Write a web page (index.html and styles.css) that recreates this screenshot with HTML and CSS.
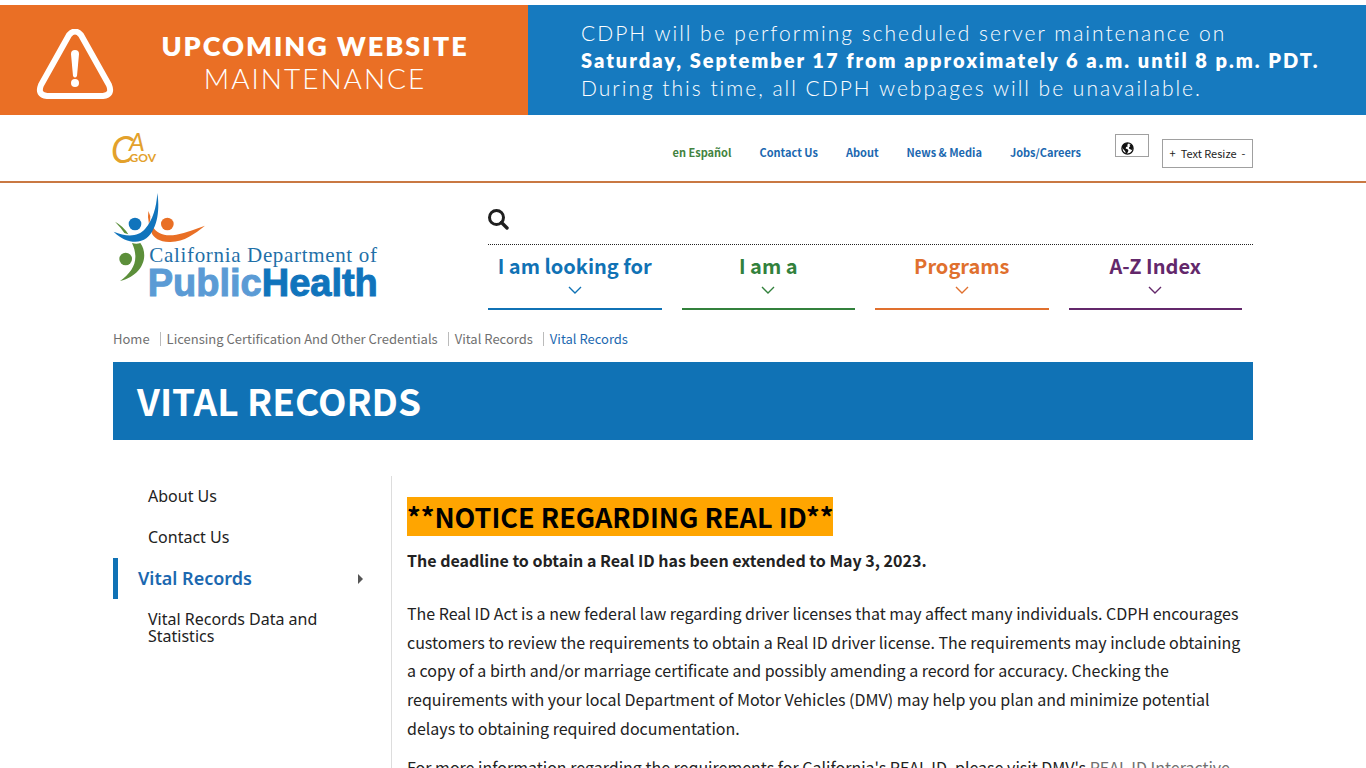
FILE: index.html
```html
<!DOCTYPE html>
<html lang="en">
<head>
    <meta charset="UTF-8">
    <meta name="viewport" content="width=device-width, initial-scale=1.0">
    <title>Vital Records</title>
    <link rel="stylesheet" href="styles.css">
</head>
<body>

    <section class="alert-banner">
        <div class="alert-title">
            <svg class="alert-icon" viewBox="0 0 78 70" aria-hidden="true">
                <path d="M33 6 Q39 -1 45 6 L73 56 Q77 66 67 67 H11 Q1 66 5 56 Z" fill="none" stroke="#fff" stroke-width="6" stroke-linejoin="round"/>
                <path d="M35 25 Q35 21 39 21 Q43 21 43 25 L41 47 Q39 50 37 47 Z" fill="#fff"/>
                <circle cx="39" cy="54" r="4" fill="#fff"/>
            </svg>
            <p class="alert-heading"><strong>UPCOMING WEBSITE</strong><br>MAINTENANCE</p>
        </div>
        <p class="alert-text">
            CDPH will be performing scheduled server maintenance on<br>
            <strong>Saturday, September 17 from approximately 6 a.m. until 8 p.m. PDT.</strong><br>
            During this time, all CDPH webpages will be unavailable.
        </p>
    </section>

    <div class="utility-bar">
        <div class="container utility-inner">
            <a href="#" class="ca-gov" aria-label="CA.gov">
                <svg viewBox="0 0 44 34" width="44" height="34">
                    <g fill="#e3a12b">
                        <text x="-2" y="31" class="ca-c">C</text>
                        <text x="16" y="19" class="ca-a">A</text>
                        <text x="14" y="30" class="ca-dot">.GOV</text>
                    </g>
                </svg>
            </a>
            <nav class="utility-links">
                <a href="#" class="espanol">en Español</a>
                <a href="#">Contact Us</a>
                <a href="#">About</a>
                <a href="#">News &amp; Media</a>
                <a href="#">Jobs/Careers</a>
            </nav>
            <button class="translate" aria-label="Translate">
                <svg viewBox="0 0 14 14" width="13" height="13">
                    <circle cx="7" cy="7" r="6" fill="#fff" stroke="#111" stroke-width="1.4"/>
                    <path d="M1.2 5 Q3 1 7 1 L8 2 L6.500 3.300 L7.500 4.500 L5.500 5.500 L5 7 L7.500 8 L8 9.500 L6.300 12.800 Q4.600 12.500 4.500 10 L2.800 8 L1.500 6.500 Z" fill="#111"/>
                    <path d="M9 3 L11.500 3 L13 6 L12 9 L10.700 8 L8.800 7.400 L8.700 5.600 L10 4.600 Z" fill="#111"/>
                </svg>
            </button>
            <div class="text-resize">
                <button aria-label="Increase text size">+</button>
                <span>Text Resize</span>
                <button aria-label="Decrease text size">-</button>
            </div>
        </div>
    </div>

    <header class="container site-header">
        <a href="#" class="logo" aria-label="California Department of Public Health">
            <svg viewBox="0 0 801 321">
                <path d="M6 86 Q32 100 46 124 L34 120 Q24 104 6 86 Z" fill="#5c8f3a"/>
                <path d="M57 150 Q70 154 82 150 C108 186 92 246 21 264 C62 234 80 200 57 150 Z" fill="#5c8f3a"/>
                <circle cx="38" cy="198" r="19" fill="#5c8f3a"/>
                <path d="M106 54 L112 70 Q113 82 108 94 Q103 72 106 54 Z" fill="#e96f25"/>
                <path d="M118 98 C132 124 156 130 190 125 C220 119 248 108 276 98 C245 122 215 146 172 147 C140 148 122 134 116 120 Z" fill="#e96f25"/>
                <circle cx="163" cy="93" r="19" fill="#e96f25"/>
                <path d="M133 0 C142 60 130 112 100 136 C76 154 36 150 2 116 C40 132 76 132 96 108 C120 80 130 45 133 0 Z" fill="#1074bc"/>
                <circle cx="66" cy="93" r="19" fill="#1074bc"/>
                <text x="109" y="208" class="logo-dept">California Department of</text>
                <text x="104" y="309" class="logo-name"><tspan class="logo-public">Public</tspan><tspan>Health</tspan></text>
            </svg>
        </a>
        <div class="header-right">
            <div class="search-row">
                <button class="search-btn" aria-label="Search">
                    <svg viewBox="0 0 21 21" width="21" height="21">
                        <circle cx="8.500" cy="8.500" r="7" fill="none" stroke="#1f1f1f" stroke-width="3"/>
                        <path d="M13.500 13.500 L19 19" stroke="#1f1f1f" stroke-width="3.400" stroke-linecap="round"/>
                    </svg>
                </button>
            </div>
            <nav class="main-nav">
                <a href="#" class="nav-blue">I am looking for
                    <svg viewBox="0 0 14 8"><path d="M1 1 L7 7 L13 1"/></svg></a>
                <a href="#" class="nav-green">I am a
                    <svg viewBox="0 0 14 8"><path d="M1 1 L7 7 L13 1"/></svg></a>
                <a href="#" class="nav-orange">Programs
                    <svg viewBox="0 0 14 8"><path d="M1 1 L7 7 L13 1"/></svg></a>
                <a href="#" class="nav-purple">A-Z Index
                    <svg viewBox="0 0 14 8"><path d="M1 1 L7 7 L13 1"/></svg></a>
            </nav>
        </div>
    </header>

    <div class="container">
        <nav class="breadcrumb" aria-label="Breadcrumb">
            <a href="#">Home</a>
            <a href="#">Licensing Certification And Other Credentials</a>
            <a href="#">Vital Records</a>
            <a href="#" class="current">Vital Records</a>
        </nav>

        <h1 class="page-title">VITAL RECORDS</h1>

        <div class="page-body">
            <nav class="side-nav">
                <a href="#">About Us</a>
                <a href="#">Contact Us</a>
                <a href="#" class="active">Vital Records</a>
                <a href="#">Vital Records Data and Statistics</a>
            </nav>
            <main class="content">
                <h2><mark>**NOTICE REGARDING REAL ID**</mark></h2>
                <p class="deadline"><strong>The deadline to obtain a Real ID has been extended to May 3, 2023.</strong></p>
                <p>The Real ID Act is a new federal law regarding driver licenses that may affect many individuals. CDPH encourages customers to review the requirements to obtain a Real ID driver license. The requirements may include obtaining a copy of a birth and/or marriage certificate and possibly amending a record for accuracy. Checking the requirements with your local Department of Motor Vehicles (DMV) may help you plan and minimize potential delays to obtaining required documentation.</p>
                <p>For more information regarding the requirements for California's REAL ID, please visit DMV's <a href="#">REAL ID Interactive</a></p>
            </main>
        </div>
    </div>

</body>
</html>
```
FILE: styles.css
```css
:root {
    --blue: #1072b5;
    --green: #32813c;
    --orange: #e0702e;
    --purple: #63286b;
    --text: #222222;
    --grey: #707070;
    --border: #a0a0a0;
}

* {
    box-sizing: border-box;
    margin: 0;
    padding: 0;
}

body {
    font-family: 'Source Sans Pro', 'Noto Sans CJK SC', sans-serif;
    font-size: 16px;
    color: var(--text);
    background-color: #ffffff;
}

a {
    text-decoration: none;
}

button {
    font-family: inherit;
    cursor: pointer;
}

.container {
    max-width: 1140px;
    margin: 0 auto;
}

/* Maintenance banner */
.alert-banner {
    display: flex;
    margin-top: 5px;
    height: 110px;
    font-family: 'Century Gothic', Lato, sans-serif;
    color: white;
    background-color: #167abf;
}

.alert-title {
    display: flex;
    align-items: center;
    width: 528px;
    padding: 8px 36px 0;
    background-color: #ea6f25;
}

.alert-icon {
    width: 78px;
    height: 70px;
}

.alert-heading {
    flex: 1;
    padding: 0 0 4px 24px;
    font-size: 28px;
    font-weight: 300;
    line-height: 33px;
    letter-spacing: 2px;
    text-align: center;
}

.alert-heading strong {
    font-size: 27px;
    font-weight: 800;
}

.alert-text {
    padding: 14px 0 0 53px;
    font-size: 21px;
    font-weight: 300;
    line-height: 27px;
    letter-spacing: 2px;
    white-space: nowrap;
}

.alert-text strong {
    font-size: 20px;
    font-weight: 800;
}

/* Utility bar */
.utility-bar {
    border-bottom: 2px solid #c97843;
}

.utility-inner {
    display: flex;
    align-items: flex-start;
    height: 66px;
    padding-top: 17px;
}

.ca-gov {
    margin-right: auto;
}

.ca-gov svg {
    overflow: visible;
}

.ca-gov text {
    font-family: Lato, sans-serif;
}

.ca-c {
    font-size: 36px;
    font-style: italic;
    font-weight: 400;
}

.ca-a {
    font-size: 25px;
    font-style: italic;
    font-weight: 400;
}

.ca-dot {
    font-size: 12px;
    font-weight: 700;
}

.utility-links {
    display: flex;
    gap: 28px;
    margin-right: 34px;
    font-size: 11px;
    font-weight: 700;
    line-height: 40px;
}

.utility-links a {
    color: #1b68b0;
}

.utility-links .espanol {
    color: #43833f;
}

.translate {
    width: 34px;
    height: 23px;
    margin: 2px 13px 0 0;
    padding: 6px 0 0 5px;
    border: 1px solid var(--border);
    background: white;
    text-align: left;
}

.translate svg {
    display: block;
}

.text-resize {
    display: flex;
    align-items: center;
    justify-content: center;
    gap: 5px;
    width: 91px;
    height: 29px;
    margin-top: 7px;
    padding-bottom: 2px;
    border: 1px solid var(--border);
    font-size: 11px;
}

.text-resize button {
    border: none;
    background: none;
    font-size: 11px;
    color: var(--text);
}

/* Header */
.site-header {
    display: flex;
    justify-content: space-between;
    height: 127px;
}

.logo {
    width: 267px;
    padding-top: 10px;
}

.logo svg {
    display: block;
    width: 100%;
    overflow: visible;
}

.logo-dept {
    font-family: 'Liberation Serif', serif;
    font-size: 63px;
    letter-spacing: 2px;
    fill: #1f70a8;
}

.logo-name {
    font-family: 'Liberation Sans', sans-serif;
    font-size: 114px;
    font-weight: 700;
    fill: #1074bc;
    stroke: #1074bc;
    stroke-width: 3px;
}

.logo-public {
    fill: #5b9bd5;
    stroke: #5b9bd5;
}

.header-right {
    width: 765px;
}

.search-row {
    height: 62px;
    padding-top: 26px;
    border-bottom: 1px dotted #222222;
}

.search-btn {
    display: block;
    border: none;
    background: none;
}

.search-btn svg {
    display: block;
}

.main-nav {
    display: grid;
    grid-template-columns: repeat(4, 1fr);
    gap: 20px;
    padding-right: 11px;
}

.main-nav a {
    height: 65px;
    padding-top: 6px;
    border-bottom: 2px solid;
    font-size: 20px;
    font-weight: 700;
    line-height: 30px;
    text-align: center;
}

.main-nav svg {
    display: block;
    width: 14px;
    height: 8px;
    margin: 5px auto 0;
    fill: none;
    stroke: currentColor;
    stroke-width: 1.4;
}

.nav-blue { color: #1072b5; }
.nav-green { color: var(--green); }
.nav-orange { color: var(--orange); }
.nav-purple { color: var(--purple); }

/* Breadcrumb and title */
.breadcrumb {
    display: flex;
    align-items: center;
    height: 52px;
    padding-top: 5px;
    font-size: 13px;
    line-height: 14px;
}

.breadcrumb a {
    color: var(--grey);
}

.breadcrumb a + a {
    margin-left: 10px;
    padding-left: 6px;
    border-left: 1px solid #bbbbbb;
}

.breadcrumb .current {
    color: #1b68b0;
}

.page-title {
    padding: 0 24px 2px;
    font-size: 37px;
    font-weight: 700;
    line-height: 76px;
    color: white;
    background-color: var(--blue);
}

/* Page body */
.page-body {
    display: flex;
    margin-top: 36px;
}

.side-nav {
    width: 279px;
    border-right: 1px solid #dddddd;
    font-family: 'Lucida Sans', 'Noto Sans', sans-serif;
}

.side-nav a {
    display: block;
    padding: 12px 30px 12px 35px;
    font-size: 16px;
    line-height: 17px;
    color: var(--text);
}

.side-nav .active {
    display: flex;
    align-items: center;
    justify-content: space-between;
    padding: 12px 28px 12px 20px;
    border-left: 5px solid var(--blue);
    font-size: 18px;
    font-weight: 600;
    color: #1b68b0;
}

.side-nav .active::after {
    content: '';
    border: 5px solid transparent;
    border-left-color: #555555;
    border-right: 0;
}

.content {
    flex: 1;
    padding: 22px 4px 0 15px;
}

.content h2 {
    font-size: 27px;
    line-height: 37px;
}

.content mark {
    background-color: #ffa500;
    color: #000000;
}

.content p {
    margin-bottom: 10px;
    font-size: 16px;
    line-height: 1.8;
}

.content .deadline {
    margin: 11px 0 24px;
}

.content p a {
    color: var(--grey);
}
```
